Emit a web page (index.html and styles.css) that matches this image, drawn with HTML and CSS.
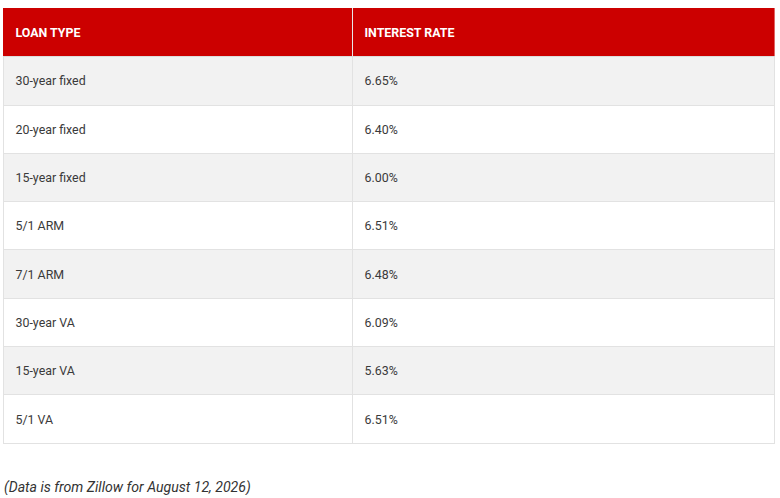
FILE: index.html
```
<!DOCTYPE html>
<html lang="en">
<head>
<meta charset="utf-8">
<title>Mortgage rates</title>
<link rel="stylesheet" href="styles.css">
</head>
<body>
<div class="page">
  <table class="rates">
    <thead>
      <tr><th class="col-type">LOAN TYPE</th><th>INTEREST RATE</th></tr>
    </thead>
    <tbody>
      <tr><td>30-year fixed</td><td>6.65%</td></tr>
      <tr><td>20-year fixed</td><td>6.40%</td></tr>
      <tr><td>15-year fixed</td><td>6.00%</td></tr>
      <tr><td>5/1 ARM</td><td>6.51%</td></tr>
      <tr><td>7/1 ARM</td><td>6.48%</td></tr>
      <tr><td>30-year VA</td><td>6.09%</td></tr>
      <tr><td>15-year VA</td><td>5.63%</td></tr>
      <tr><td>5/1 VA</td><td>6.51%</td></tr>
    </tbody>
  </table>
  <p class="note">(Data is from Zillow for August 12, 2026)</p>
</div>
</body>
</html>
```
FILE: styles.css
```
html, body {
  margin: 0;
  padding: 0;
  background: #ffffff;
}
.page {
  padding: 8px 0 0 3px;
  font-family: Roboto, "Liberation Sans", Arial, sans-serif;
  color: #333333;
}
.rates {
  width: 772px;
  border-collapse: collapse;
  font-size: 12.4px;
  table-layout: fixed;
}
.rates th, .rates td {
  border: 1px solid #e2e2e2;
  padding: 0 11.5px;
  height: 47.3px;
  text-align: left;
  vertical-align: middle;
}
.rates th {
  background: #cc0000;
  color: #ffffff;
  font-weight: 700;
  border-color: #dddddd;
  border-top-color: #cc0000;
  border-left-color: #cc0000;
  border-right-color: #e06666;
}
.rates th.col-type {
  width: 325px;
  border-right-color: #e8e8e8;
}
.rates td {
  color: #3a3a3a;
}
.rates tbody tr:nth-child(odd) td {
  background: #f2f2f2;
}
.note {
  margin: 35px 0 0 1px;
  font-size: 14.1px;
  font-style: italic;
  color: #333333;
}
```
